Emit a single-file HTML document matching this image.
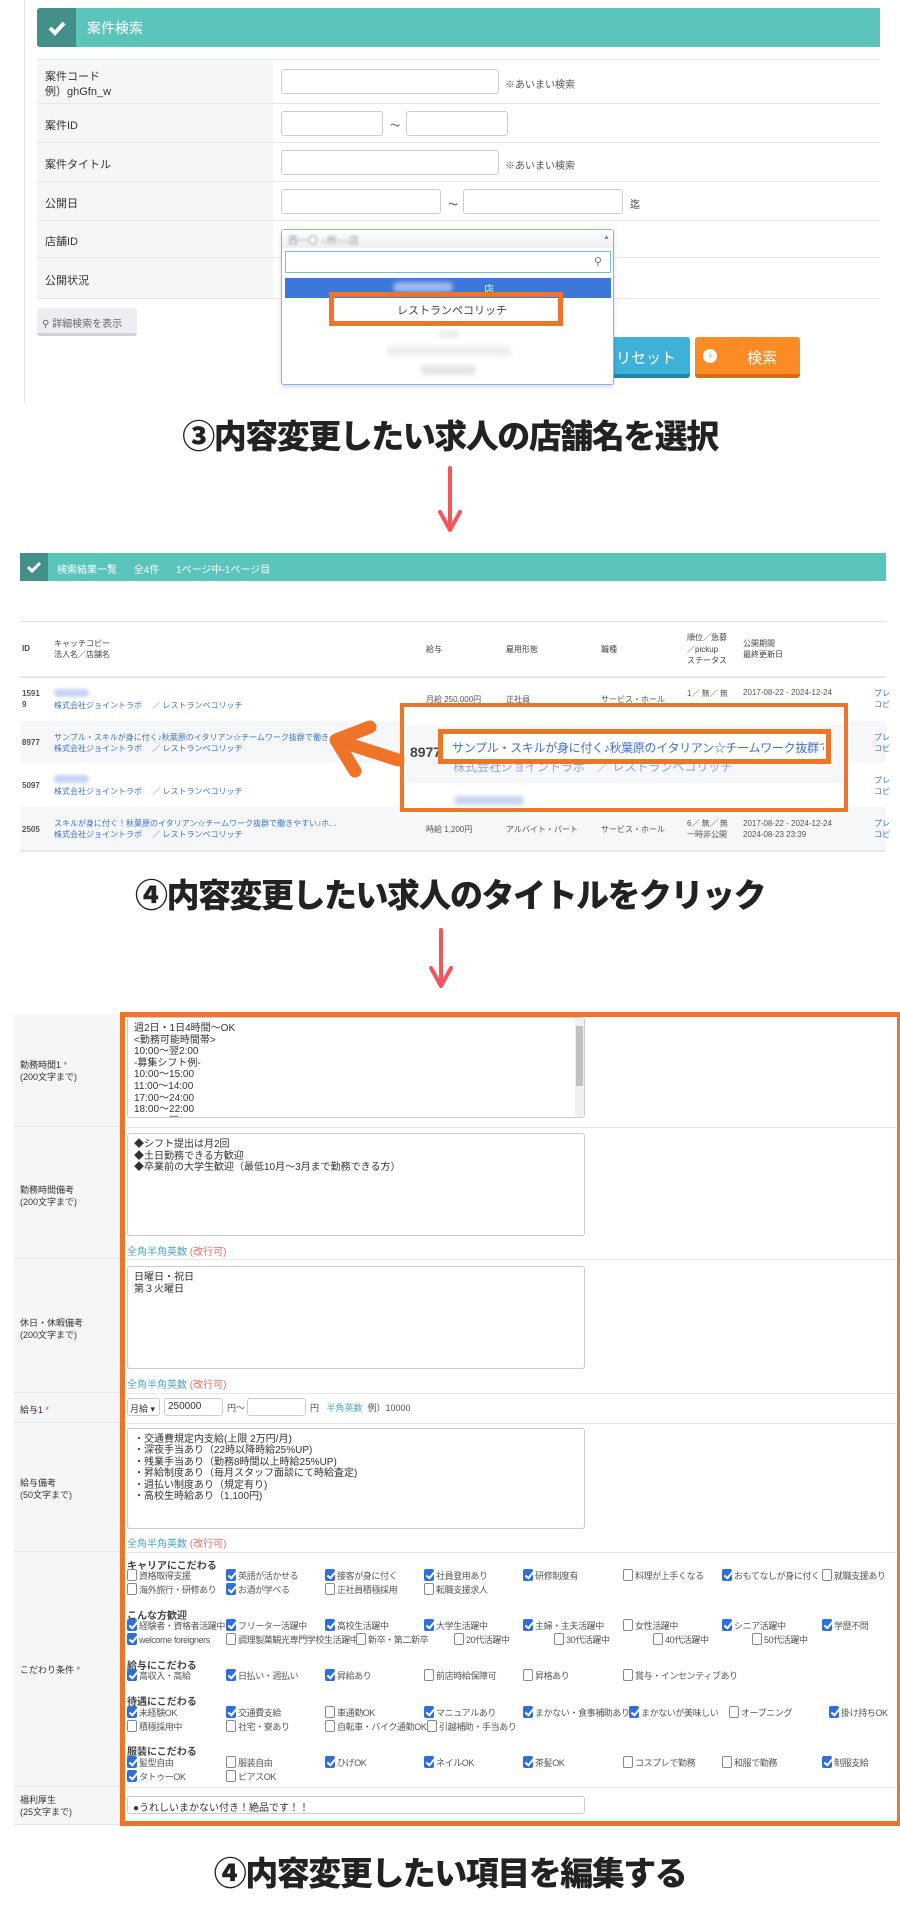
<!DOCTYPE html>
<html><head><meta charset="utf-8">
<style>
*{box-sizing:border-box;margin:0;padding:0}
body{width:900px;height:1916px;background:#fff;position:relative;overflow:hidden;font-family:"Liberation Sans","Noto Sans CJK JP",sans-serif;color:#333;font-size:11px}
.a{position:absolute}
.hdr{background:#5bc4bb;color:#fff}
.chk{background:#439089}
.lab{background:#f5f6f8;border-bottom:1px solid #e6e8eb}
.row{border-bottom:1px solid #e6e8eb}
.inp{position:absolute;border:1px solid #ccc;border-radius:3px;background:#fff;white-space:nowrap;overflow:hidden}
.big{position:absolute;font-family:"Noto Sans CJK JP",sans-serif;font-weight:900;color:#222;font-size:33px;text-align:center;width:900px;left:0;letter-spacing:-1.5px}
.blue{color:#3c6fd6}
.cb{position:absolute;font-size:9px;color:#555;white-space:nowrap;line-height:13px;letter-spacing:-0.4px}
.cb i{display:inline-block;width:10px;height:12px;border:1px solid #888;border-radius:2px;vertical-align:-2px;margin-right:2px;background:#fff;position:relative}
.cb i.on{background:#2f6fd8;border-color:#2f6fd8}
.cb i.on:after{content:"";position:absolute;left:3px;top:0px;width:3px;height:7px;border:solid #fff;border-width:0 2px 2px 0;transform:rotate(40deg)}
.h{position:absolute;font-size:10px;font-weight:bold;color:#444}
.ta{position:absolute;border:1px solid #ccc;border-radius:3px;background:#fff;font-size:10px;line-height:11.6px;padding:5px 6px;color:#333;overflow:hidden}
.note{position:absolute;font-size:10px;color:#4aa8c7}
.note span{color:#e86a6a}
</style></head><body>

<!-- section 1 -->
<div class="a" style="left:24px;top:0;width:1px;height:403px;background:#e4e4e4"></div>
<div class="a hdr" style="left:37px;top:8px;width:843px;height:39px;border-radius:3px 0 0 3px"></div>
<div class="a chk" style="left:37px;top:8px;width:39px;height:39px;border-radius:3px 0 0 3px"></div>
<svg class="a" style="left:47px;top:18px" width="20" height="20"><path d="M3 10 L8 15 L17 5" stroke="#fff" stroke-width="4" fill="none"/></svg>
<div class="a" style="left:87px;top:18px;color:#fff;font-size:14px">案件検索</div>

<div class="a" style="left:37px;top:59px;width:843px;height:1px;background:#e6e8eb"></div>
<div class="a lab" style="left:37px;top:60px;width:236px;height:44px"></div>
<div class="a lab" style="left:37px;top:104px;width:236px;height:39px"></div>
<div class="a lab" style="left:37px;top:143px;width:236px;height:39px"></div>
<div class="a lab" style="left:37px;top:182px;width:236px;height:39px"></div>
<div class="a lab" style="left:37px;top:221px;width:236px;height:37px"></div>
<div class="a lab" style="left:37px;top:258px;width:236px;height:41px"></div>
<div class="a row" style="left:273px;top:60px;width:607px;height:44px"></div>
<div class="a row" style="left:273px;top:104px;width:607px;height:39px"></div>
<div class="a row" style="left:273px;top:143px;width:607px;height:39px"></div>
<div class="a row" style="left:273px;top:182px;width:607px;height:39px"></div>
<div class="a row" style="left:273px;top:221px;width:607px;height:37px"></div>
<div class="a row" style="left:273px;top:258px;width:607px;height:41px"></div>
<div class="a" style="left:45px;top:70px;font-size:11px;line-height:15px">案件コード<br>例）ghGfn_w</div>
<div class="a" style="left:45px;top:117px">案件ID</div>
<div class="a" style="left:45px;top:156px">案件タイトル</div>
<div class="a" style="left:45px;top:195px">公開日</div>
<div class="a" style="left:45px;top:233px">店舗ID</div>
<div class="a" style="left:45px;top:272px">公開状況</div>
<div class="inp" style="left:281px;top:69px;width:218px;height:25px"></div>
<div class="a" style="left:505px;top:76px;font-size:10px;color:#555">※あいまい検索</div>
<div class="inp" style="left:281px;top:111px;width:102px;height:25px"></div>
<div class="a" style="left:390px;top:117px;font-size:10px">～</div>
<div class="inp" style="left:406px;top:111px;width:102px;height:25px"></div>
<div class="inp" style="left:281px;top:150px;width:218px;height:25px"></div>
<div class="a" style="left:505px;top:157px;font-size:10px;color:#555">※あいまい検索</div>
<div class="inp" style="left:281px;top:189px;width:160px;height:25px"></div>
<div class="a" style="left:448px;top:196px;font-size:10px">～</div>
<div class="inp" style="left:463px;top:189px;width:160px;height:25px"></div>
<div class="a" style="left:630px;top:196px;font-size:10px">迄</div>

<div class="a" style="left:37px;top:308px;width:100px;height:28px;background:#eceef1;border-bottom:3px solid #cfd3d8;border-radius:3px;font-size:10px;color:#666;padding:7px 5px">&#9906; 詳細検索を表示</div>
<div class="a" style="left:590px;top:337px;width:100px;height:41px;background:#3fb1d9;border-bottom:4px solid #1e86a9;border-radius:3px;color:#fff;font-size:15px;padding:10px 0 0 26px">リセット</div>
<div class="a" style="left:695px;top:337px;width:105px;height:41px;background:#fb8c25;border-bottom:4px solid #d86c0b;border-radius:3px;color:#fff;font-size:15px"><span class="a" style="left:8px;top:12px;width:14px;height:14px;border-radius:7px;background:#fff;color:#fb8c25;font-size:10px;text-align:center;line-height:14px">›</span><span class="a" style="left:52px;top:10px">検索</span></div>

<div class="a" style="left:281px;top:229px;width:333px;height:156px;background:#fff;border:1px solid #8fb0ee;border-radius:3px;box-shadow:0 2px 4px rgba(0,0,0,.15)"></div>
<div class="a" style="left:282px;top:230px;width:331px;height:18px;background:linear-gradient(#fff,#eee)"></div>
<div class="a" style="left:288px;top:232px;font-size:10px;color:#999;filter:blur(1px)">西一〇 ○所○○店</div>
<div class="a" style="left:603px;top:234px;font-size:7px;color:#888">▲</div>
<div class="a" style="left:285px;top:251px;width:326px;height:22px;border:1px solid #6ec8c0;background:#fff"></div>
<div class="a" style="left:594px;top:255px;font-size:11px;color:#777">&#9906;</div>
<div class="a" style="left:285px;top:278px;width:326px;height:20px;background:#3b78d8"></div>
<div class="a" style="left:393px;top:282px;width:60px;height:10px;background:#9fb9ec;border-radius:5px;filter:blur(2px)"></div>
<div class="a" style="left:484px;top:281px;font-size:10px;color:#fff">店</div>
<div class="a" style="left:329px;top:292px;width:234px;height:34px;border:5px solid #f07428"></div>
<div class="a" style="left:397px;top:302px;font-size:11px;color:#444">レストランペコリッチ</div>
<div class="a" style="left:438px;top:330px;width:22px;height:8px;background:#eee;border-radius:4px;filter:blur(2px)"></div>
<div class="a" style="left:386px;top:346px;width:126px;height:10px;background:#eee;border-radius:5px;filter:blur(2px)"></div>
<div class="a" style="left:420px;top:365px;width:56px;height:10px;background:#e6e6e6;border-radius:5px;filter:blur(2px)"></div>

<div class="big" style="top:410px">③内容変更したい求人の店舗名を選択</div>

<svg class="a" style="left:430px;top:466px" width="40" height="70"><path d="M20 2 V62 M10 46 L20 64 L30 46" stroke="#f4555a" stroke-width="4" fill="none" stroke-linecap="round" stroke-linejoin="round"/></svg>

<!-- section 2 -->
<div class="a hdr" style="left:20px;top:553px;width:866px;height:28px"></div>
<div class="a chk" style="left:20px;top:553px;width:28px;height:28px"></div>
<svg class="a" style="left:26px;top:559px" width="16" height="16"><path d="M2 8 L6 12 L14 4" stroke="#fff" stroke-width="3" fill="none"/></svg>
<div class="a" style="left:57px;top:561px;color:#fff;font-size:10px;word-spacing:14px">検索結果一覧 全4件 1ページ中-1ページ目</div>
<div class="a" style="left:20px;top:621px;width:866px;height:1px;background:#e3e3e3"></div>
<div class="a" style="left:20px;top:676px;width:866px;height:2px;background:#e6e6e6"></div>
<div class="a" style="left:20px;top:721px;width:866px;height:42px;background:#f6f7f9"></div>
<div class="a" style="left:20px;top:807px;width:866px;height:43px;background:#f6f7f9"></div>
<div class="a" style="left:20px;top:850px;width:866px;height:2px;background:#e6e6e6"></div>
<div class="a" style="font-size:8px;font-weight:bold;color:#444;left:22px;top:644px">ID</div>
<div class="a" style="font-size:8px;color:#444;left:54px;top:638px;line-height:11px">キャッチコピー<br>法人名／店舗名</div>
<div class="a" style="font-size:8px;color:#444;left:426px;top:644px">給与</div>
<div class="a" style="font-size:8px;color:#444;left:506px;top:644px">雇用形態</div>
<div class="a" style="font-size:8px;color:#444;left:601px;top:644px">職種</div>
<div class="a" style="font-size:8px;color:#444;left:687px;top:632px;line-height:11.5px">順位／急募<br>／pickup<br>ステータス</div>
<div class="a" style="font-size:8px;color:#444;left:743px;top:638px;line-height:11px">公開期間<br>最終更新日</div>

<div class="a" style="font-size:8px;font-weight:bold;color:#555;left:22px;top:688px;line-height:11px">1591<br>9</div>
<div class="a" style="left:54px;top:689px;width:35px;height:8px;background:#c7d4f4;border-radius:4px;filter:blur(1.5px)"></div>
<div class="a blue" style="font-size:8px;left:54px;top:700px">株式会社ジョイントラボ　 ／ レストランペコリッチ</div>
<div class="a" style="font-size:8px;color:#555;left:426px;top:694px">月給 250,000円</div>
<div class="a" style="font-size:8px;color:#555;left:506px;top:694px">正社員</div>
<div class="a" style="font-size:8px;color:#555;left:601px;top:694px">サービス・ホール</div>
<div class="a" style="font-size:8px;color:#555;left:687px;top:688px">1／ 無／ 無</div>
<div class="a" style="font-size:8px;color:#555;left:743px;top:688px">2017-08-22 - 2024-12-24</div>

<div class="a" style="font-size:8px;font-weight:bold;color:#555;left:22px;top:738px">8977</div>
<div class="a blue" style="font-size:8px;left:54px;top:732px;line-height:11px">サンプル・スキルが身に付く♪秋葉原のイタリアン☆チームワーク抜群で働き…<br>株式会社ジョイントラボ　 ／ レストランペコリッチ</div>

<div class="a" style="font-size:8px;font-weight:bold;color:#555;left:22px;top:781px">5097</div>
<div class="a" style="left:54px;top:775px;width:35px;height:8px;background:#c7d4f4;border-radius:4px;filter:blur(1.5px)"></div>
<div class="a blue" style="font-size:8px;left:54px;top:786px">株式会社ジョイントラボ　 ／ レストランペコリッチ</div>

<div class="a" style="font-size:8px;font-weight:bold;color:#555;left:22px;top:825px">2505</div>
<div class="a blue" style="font-size:8px;left:54px;top:818px;line-height:11px">スキルが身に付く！秋葉原のイタリアン☆チームワーク抜群で働きやすい♪ホ…<br>株式会社ジョイントラボ　 ／ レストランペコリッチ</div>
<div class="a" style="font-size:8px;color:#555;left:426px;top:824px">時給 1,200円</div>
<div class="a" style="font-size:8px;color:#555;left:506px;top:824px">アルバイト・パート</div>
<div class="a" style="font-size:8px;color:#555;left:601px;top:824px">サービス・ホール</div>
<div class="a" style="font-size:8px;color:#555;left:687px;top:818px;line-height:11px">6／ 無／ 無<br>一時非公開</div>
<div class="a" style="font-size:8px;color:#555;left:743px;top:818px;line-height:11px">2017-08-22 - 2024-12-24<br>2024-08-23 23:39</div>
<div class="a blue" style="font-size:8px;left:874px;top:688px;line-height:11px">プレ<br>コピ</div>
<div class="a blue" style="font-size:8px;left:874px;top:732px;line-height:11px">プレ<br>コピ</div>
<div class="a blue" style="font-size:8px;left:874px;top:775px;line-height:11px">プレ<br>コピ</div>
<div class="a blue" style="font-size:8px;left:874px;top:818px;line-height:11px">プレ<br>コピ</div>

<div class="a" style="left:400px;top:703px;width:448px;height:109px;border:4px solid #f07428;background:#fff"></div>
<div class="a" style="left:406px;top:725px;width:437px;height:58px;background:#f6f7f9"></div>
<div class="a" style="left:410px;top:744px;font-size:14px;font-weight:bold;color:#444">8977</div>
<div class="a blue" style="left:453px;top:758px;font-size:12px;opacity:.6">株式会社ジョイントラボ　／ レストランペコリッチ</div>
<div class="a" style="left:438px;top:729px;width:393px;height:35px;border:5px solid #f07428;background:#fff"></div>
<div class="a blue" style="left:452px;top:739px;font-size:12px;white-space:nowrap;width:372px;overflow:hidden;letter-spacing:-0.3px">サンプル・スキルが身に付く♪秋葉原のイタリアン☆チームワーク抜群で働き…</div>
<div class="a" style="left:454px;top:796px;width:70px;height:9px;background:#c7d4f4;border-radius:4px;filter:blur(2px)"></div>
<svg class="a" style="left:320px;top:715px" width="90" height="70"><path d="M78 45 L16 25 M50 12 L16 25 L35 56" stroke="#f07428" stroke-width="13" fill="none" stroke-linecap="round" stroke-linejoin="round"/></svg>

<div class="big" style="top:869px">④内容変更したい求人のタイトルをクリック</div>

<svg class="a" style="left:421px;top:928px" width="40" height="64"><path d="M20 2 V56 M10 40 L20 58 L30 40" stroke="#f4555a" stroke-width="4" fill="none" stroke-linecap="round" stroke-linejoin="round"/></svg>

<!-- section 3 -->
<div class="a lab" style="left:14px;top:1014px;width:106px;height:113px"></div>
<div class="a lab" style="left:14px;top:1127px;width:106px;height:132px"></div>
<div class="a lab" style="left:14px;top:1259px;width:106px;height:134px"></div>
<div class="a lab" style="left:14px;top:1393px;width:106px;height:30px"></div>
<div class="a lab" style="left:14px;top:1423px;width:106px;height:129px"></div>
<div class="a lab" style="left:14px;top:1552px;width:106px;height:235px"></div>
<div class="a lab" style="left:14px;top:1787px;width:106px;height:38px"></div>
<div class="a" style="left:120px;top:1127px;width:777px;height:1px;background:#e6e8eb"></div>
<div class="a" style="left:120px;top:1259px;width:777px;height:1px;background:#e6e8eb"></div>
<div class="a" style="left:120px;top:1393px;width:777px;height:1px;background:#e6e8eb"></div>
<div class="a" style="left:120px;top:1423px;width:777px;height:1px;background:#e6e8eb"></div>
<div class="a" style="left:120px;top:1552px;width:777px;height:1px;background:#e6e8eb"></div>
<div class="a" style="left:120px;top:1787px;width:777px;height:1px;background:#e6e8eb"></div>

<div class="a" style="font-size:9px;left:20px;top:1059px;line-height:12px">勤務時間1 <span style="color:#e33">*</span><br>(200文字まで)</div>
<div class="a" style="font-size:9px;left:20px;top:1184px;line-height:12px">勤務時間備考<br>(200文字まで)</div>
<div class="a" style="font-size:9px;left:20px;top:1317px;line-height:12px">休日・休暇備考<br>(200文字まで)</div>
<div class="a" style="font-size:9px;left:20px;top:1403px">給与1 <span style="color:#e33">*</span></div>
<div class="a" style="font-size:9px;left:20px;top:1477px;line-height:12px">給与備考<br>(50文字まで)</div>
<div class="a" style="font-size:9px;left:20px;top:1663px">こだわり条件 <span style="color:#e33">*</span></div>
<div class="a" style="font-size:9px;left:20px;top:1794px;line-height:12px">福利厚生<br>(25文字まで)</div>

<div class="ta" style="left:127px;top:1017px;width:458px;height:101px;line-height:11.6px">週2日・1日4時間～OK<br>&lt;勤務可能時間帯&gt;<br>10:00～翌2:00<br>-募集シフト例-<br>10:00～15:00<br>11:00～14:00<br>17:00～24:00<br>18:00～22:00<br>22:00～翌2:00</div>
<div class="a" style="left:575px;top:1018px;width:9px;height:99px;background:#f0f0f0"></div>
<div class="a" style="left:576px;top:1026px;width:7px;height:60px;background:#c1c1c1"></div>
<div class="ta" style="left:127px;top:1133px;width:458px;height:103px">◆シフト提出は月2回<br>◆土日勤務できる方歓迎<br>◆卒業前の大学生歓迎（最低10月～3月まで勤務できる方）</div>
<div class="note" style="left:127px;top:1243px">全角半角英数 <span>(改行可)</span></div>
<div class="ta" style="left:127px;top:1266px;width:458px;height:103px">日曜日・祝日<br>第３火曜日</div>
<div class="note" style="left:127px;top:1376px">全角半角英数 <span>(改行可)</span></div>

<div class="inp" style="left:127px;top:1398px;width:33px;height:18px;font-size:9px;padding:3px 2px">月給 ▾</div>
<div class="inp" style="left:164px;top:1398px;width:59px;height:18px;font-size:10px;padding:2px 3px">250000</div>
<div class="a" style="left:227px;top:1401px;font-size:9px;color:#555">円～</div>
<div class="inp" style="left:247px;top:1398px;width:59px;height:18px"></div>
<div class="a" style="left:310px;top:1401px;font-size:9px;color:#555;white-space:nowrap">円 &nbsp; <span style="color:#4aa8c7">半角英数</span> &nbsp;例）10000</div>

<div class="ta" style="left:127px;top:1428px;width:458px;height:101px;line-height:11.4px">・交通費規定内支給(上限 2万円/月)<br>・深夜手当あり（22時以降時給25%UP)<br>・残業手当あり（勤務8時間以上時給25%UP)<br>・昇給制度あり（毎月スタッフ面談にて時給査定)<br>・週払い制度あり（規定有り)<br>・高校生時給あり（1,100円)</div>
<div class="note" style="left:127px;top:1535px">全角半角英数 <span>(改行可)</span></div>

<div class="h" style="left:127px;top:1557px">キャリアにこだわる</div>
<div class="cb" style="left:127px;top:1569px"><i></i>資格取得支援</div>
<div class="cb" style="left:226px;top:1569px"><i class="on"></i>英語が活かせる</div>
<div class="cb" style="left:325px;top:1569px"><i class="on"></i>接客が身に付く</div>
<div class="cb" style="left:424px;top:1569px"><i class="on"></i>社員登用あり</div>
<div class="cb" style="left:523px;top:1569px"><i class="on"></i>研修制度有</div>
<div class="cb" style="left:623px;top:1569px"><i></i>料理が上手くなる</div>
<div class="cb" style="left:722px;top:1569px"><i class="on"></i>おもてなしが身に付く</div>
<div class="cb" style="left:822px;top:1569px"><i></i>就職支援あり</div>
<div class="cb" style="left:127px;top:1583px"><i></i>海外旅行・研修あり</div>
<div class="cb" style="left:226px;top:1583px"><i class="on"></i>お酒が学べる</div>
<div class="cb" style="left:325px;top:1583px"><i></i>正社員積極採用</div>
<div class="cb" style="left:424px;top:1583px"><i></i>転職支援求人</div>

<div class="h" style="left:127px;top:1607px">こんな方歓迎</div>
<div class="cb" style="left:127px;top:1619px"><i class="on"></i>経験者・資格者活躍中</div>
<div class="cb" style="left:226px;top:1619px"><i class="on"></i>フリーター活躍中</div>
<div class="cb" style="left:325px;top:1619px"><i class="on"></i>高校生活躍中</div>
<div class="cb" style="left:424px;top:1619px"><i class="on"></i>大学生活躍中</div>
<div class="cb" style="left:523px;top:1619px"><i class="on"></i>主婦・主夫活躍中</div>
<div class="cb" style="left:623px;top:1619px"><i></i>女性活躍中</div>
<div class="cb" style="left:722px;top:1619px"><i class="on"></i>シニア活躍中</div>
<div class="cb" style="left:822px;top:1619px"><i class="on"></i>学歴不問</div>
<div class="cb" style="left:127px;top:1633px"><i class="on"></i>welcome foreigners</div>
<div class="cb" style="left:226px;top:1633px"><i></i>調理製菓観光専門学校生活躍中</div>
<div class="cb" style="left:356px;top:1633px"><i></i>新卒・第二新卒</div>
<div class="cb" style="left:454px;top:1633px"><i></i>20代活躍中</div>
<div class="cb" style="left:554px;top:1633px"><i></i>30代活躍中</div>
<div class="cb" style="left:653px;top:1633px"><i></i>40代活躍中</div>
<div class="cb" style="left:752px;top:1633px"><i></i>50代活躍中</div>

<div class="h" style="left:127px;top:1657px">給与にこだわる</div>
<div class="cb" style="left:127px;top:1669px"><i class="on"></i>高収入・高給</div>
<div class="cb" style="left:226px;top:1669px"><i class="on"></i>日払い・週払い</div>
<div class="cb" style="left:325px;top:1669px"><i class="on"></i>昇給あり</div>
<div class="cb" style="left:424px;top:1669px"><i></i>前店時給保障可</div>
<div class="cb" style="left:523px;top:1669px"><i></i>昇格あり</div>
<div class="cb" style="left:623px;top:1669px"><i></i>賞与・インセンティブあり</div>

<div class="h" style="left:127px;top:1693px">待遇にこだわる</div>
<div class="cb" style="left:127px;top:1706px"><i class="on"></i>未経験OK</div>
<div class="cb" style="left:226px;top:1706px"><i class="on"></i>交通費支給</div>
<div class="cb" style="left:325px;top:1706px"><i></i>車通勤OK</div>
<div class="cb" style="left:424px;top:1706px"><i class="on"></i>マニュアルあり</div>
<div class="cb" style="left:523px;top:1706px"><i class="on"></i>まかない・食事補助あり</div>
<div class="cb" style="left:629px;top:1706px"><i class="on"></i>まかないが美味しい</div>
<div class="cb" style="left:729px;top:1706px"><i></i>オープニング</div>
<div class="cb" style="left:829px;top:1706px"><i class="on"></i>掛け持ちOK</div>
<div class="cb" style="left:127px;top:1720px"><i></i>積極採用中</div>
<div class="cb" style="left:226px;top:1720px"><i></i>社宅・寮あり</div>
<div class="cb" style="left:325px;top:1720px"><i></i>自転車・バイク通勤OK</div>
<div class="cb" style="left:427px;top:1720px"><i></i>引越補助・手当あり</div>

<div class="h" style="left:127px;top:1743px">服装にこだわる</div>
<div class="cb" style="left:127px;top:1756px"><i class="on"></i>髪型自由</div>
<div class="cb" style="left:226px;top:1756px"><i></i>服装自由</div>
<div class="cb" style="left:325px;top:1756px"><i class="on"></i>ひげOK</div>
<div class="cb" style="left:424px;top:1756px"><i class="on"></i>ネイルOK</div>
<div class="cb" style="left:523px;top:1756px"><i class="on"></i>茶髪OK</div>
<div class="cb" style="left:623px;top:1756px"><i></i>コスプレで勤務</div>
<div class="cb" style="left:722px;top:1756px"><i></i>和服で勤務</div>
<div class="cb" style="left:822px;top:1756px"><i class="on"></i>制服支給</div>
<div class="cb" style="left:127px;top:1770px"><i class="on"></i>タトゥーOK</div>
<div class="cb" style="left:226px;top:1770px"><i></i>ピアスOK</div>

<div class="inp" style="left:127px;top:1796px;width:458px;height:18px;font-size:10px;padding:2px 5px">●うれしいまかない付き！絶品です！！</div>

<div class="a" style="left:120px;top:1012px;width:780px;height:814px;border:5px solid #f07428;border-right-width:3px"></div>

<div class="big" style="top:1847px">④内容変更したい項目を編集する</div>
</body></html>
